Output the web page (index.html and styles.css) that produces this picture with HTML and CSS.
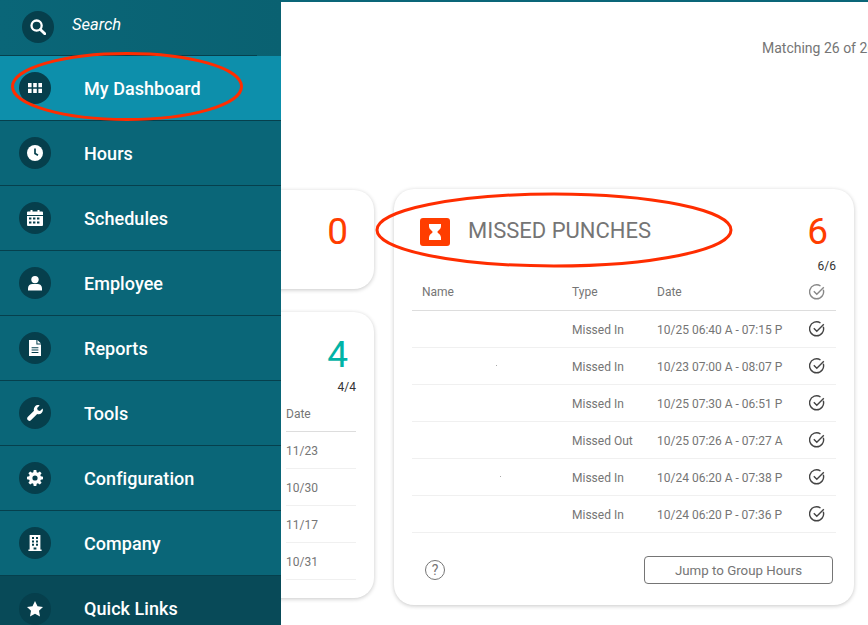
FILE: index.html
```html
<!DOCTYPE html>
<html lang="en">
<head>
<meta charset="utf-8">
<title>My Dashboard</title>
<link rel="stylesheet" href="styles.css">
</head>
<body>
<div class="page">
  <nav class="sidebar">
    <div class="search">
      <div class="search-inner">
        <span class="disc">
          <svg viewBox="0 0 16 16" class="ico"><circle cx="6.600" cy="6.600" r="5.100" fill="none" stroke="#fff" stroke-width="2.300"/><path d="M10.400 10.400l4.400 4.400" stroke="#fff" stroke-width="2.800" stroke-linecap="round"/></svg>
        </span>
        <span class="search-label">Search</span>
      </div>
    </div>
    <a class="item active">
      <span class="disc"><svg viewBox="0 0 16 16" class="ico"><path d="M1 3h3.600v4.200H1zM6.200 3h3.600v4.200H6.200zM11.400 3H15v4.200h-3.600zM1 8.800h3.600V13H1zM6.200 8.800h3.600V13H6.200zM11.400 8.800H15V13h-3.600z" fill="#fff"/></svg></span>
      <span class="label">My Dashboard</span>
    </a>
    <a class="item">
      <span class="disc"><svg viewBox="0 0 16 16" class="ico"><circle cx="8" cy="8" r="8" fill="#fff"/><path d="M8 3.400V8.400l3 1.800" fill="none" stroke="#063f4c" stroke-width="1.700"/></svg></span>
      <span class="label">Hours</span>
    </a>
    <a class="item">
      <span class="disc"><svg viewBox="0 0 16 16" class="ico"><path fill="#fff" fill-rule="evenodd" d="M3.500 0h2v1.600h5V0h2v1.600H15a1 1 0 0 1 1 1V5H0V2.600a1 1 0 0 1 1-1h2.500zM0 6h16v9a1 1 0 0 1-1 1H1a1 1 0 0 1-1-1zM2 7.600v2h2.400v-2zm4 0v2h2.400v-2zm4 0v2h2.400v-2zM2 11.400v2h2.400v-2zm4 0v2h2.400v-2zm4 0v2h2.400v-2z"/></svg></span>
      <span class="label">Schedules</span>
    </a>
    <a class="item">
      <span class="disc"><svg viewBox="0 0 16 16" class="ico"><circle cx="8" cy="4.600" r="3.700" fill="#fff"/><path d="M1 15.400v-2.200C1 10.600 3.200 9 5.400 9h5.200c2.200 0 4.400 1.600 4.400 4.200v2.200z" fill="#fff"/></svg></span>
      <span class="label">Employee</span>
    </a>
    <a class="item">
      <span class="disc"><svg viewBox="0 0 16 16" class="ico"><path fill="#fff" fill-rule="evenodd" d="M2 0h7.400v4.600H14V16H2zM10.400 0L14 3.600h-3.600zM4.600 7.200v1h6.800v-1zm0 2.400v1h6.800v-1zm0 2.400v1h6.800v-1z"/></svg></span>
      <span class="label">Reports</span>
    </a>
    <a class="item">
      <span class="disc"><svg viewBox="0 0 16 16" class="ico"><path fill="#fff" d="M15.600 3.400l-2.600 2.500-2.300-.6-.6-2.300L12.600.4c-1.600-.6-3.400-.3-4.600 1-1.200 1.200-1.500 2.900-1 4.400L.7 12.100c-.8.8-.8 2 0 2.800l.4.4c.8.8 2 .8 2.800 0l6.300-6.300c1.500.5 3.200.2 4.400-1 1.300-1.200 1.600-3 1-4.600z"/></svg></span>
      <span class="label">Tools</span>
    </a>
    <a class="item">
      <span class="disc"><svg viewBox="0 0 16 16" class="ico"><path fill="#fff" fill-rule="evenodd" d="M6.700 0h2.600l.4 2.200 1.200.5 1.900-1.300 1.800 1.800-1.300 1.900.5 1.200 2.200.4v2.600l-2.200.4-.5 1.200 1.300 1.900-1.800 1.800-1.900-1.300-1.200.5-.4 2.200H6.700l-.4-2.200-1.200-.5-1.900 1.300-1.800-1.800 1.300-1.900-.5-1.200L0 9.300V6.700l2.200-.4.500-1.200L1.400 3.200l1.800-1.800 1.900 1.300 1.200-.5zM8 5.400a2.600 2.600 0 1 0 0 5.200 2.600 2.600 0 0 0 0-5.200z"/></svg></span>
      <span class="label">Configuration</span>
    </a>
    <a class="item">
      <span class="disc"><svg viewBox="0 0 16 16" class="ico"><path fill="#fff" fill-rule="evenodd" d="M2.600 0h10.800v14.600h1.200V16H1.400v-1.400h1.200zM5 2v2h2V2zm4 0v2h2V2zM5 5.400v2h2v-2zm4 0v2h2v-2zM5 8.800v2h2v-2zm4 0v2h2v-2zM6.600 12.400v2.200h2.800v-2.200z"/></svg></span>
      <span class="label">Company</span>
    </a>
    <a class="item quick">
      <span class="disc"><svg viewBox="0 0 16 16" class="ico"><path fill="#fff" d="M8 0l2.500 5.200 5.500.7-4 3.900 1 5.600L8 12.700l-5 2.700 1-5.600-4-3.900 5.500-.7z"/></svg></span>
      <span class="label">Quick Links</span>
    </a>
  </nav>

  <main class="main">
    <p class="matching">Matching 26 of 26 employees</p>
    <div class="board">
      <div class="side-col">
        <section class="card card-small">
          <div class="count red">0</div>
        </section>
        <section class="card card-list">
          <div class="count teal">4</div>
          <div class="ratio">4/4</div>
          <div class="mini-head">Date</div>
          <div class="mini-row">11/23</div>
          <div class="mini-row">10/30</div>
          <div class="mini-row">11/17</div>
          <div class="mini-row">10/31</div>
        </section>
      </div>

      <section class="card card-main">
        <header class="card-head">
          <span class="badge">
            <svg viewBox="0 0 30 28" width="30" height="28"><path fill="#fff" d="M9 6h12v2.600c0 2.600-2.600 3.800-3.800 5.400 1.200 1.600 3.800 2.800 3.800 5.400V22H9v-2.600c0-2.600 2.600-3.800 3.800-5.400C11.600 12.400 9 11.200 9 8.600z"/></svg>
          </span>
          <h2 class="title">MISSED PUNCHES</h2>
          <div class="count red">6</div>
        </header>
        <div class="ratio">6/6</div>
        <table class="grid">
          <thead>
            <tr>
              <th class="c-name">Name</th><th class="c-type">Type</th><th class="c-date">Date</th>
              <th class="c-check"><svg class="check head-check" viewBox="0 0 16 16"><path d="M14.300 5.800A7 7 0 1 1 11.500 2" /><path d="M4.800 7.300l3 3 7-7"/></svg></th>
            </tr>
          </thead>
          <tbody>
            <tr><td></td><td class="cell">Missed In</td><td class="cell">10/25 06:40 A - 07:15 P</td><td class="c-check"><svg class="check" viewBox="0 0 16 16"><path d="M14.300 5.800A7 7 0 1 1 11.500 2" /><path d="M4.800 7.300l3 3 7-7"/></svg></td></tr>
            <tr><td><span class="speck"></span></td><td class="cell">Missed In</td><td class="cell">10/23 07:00 A - 08:07 P</td><td class="c-check"><svg class="check" viewBox="0 0 16 16"><path d="M14.300 5.800A7 7 0 1 1 11.500 2" /><path d="M4.800 7.300l3 3 7-7"/></svg></td></tr>
            <tr><td></td><td class="cell">Missed In</td><td class="cell">10/25 07:30 A - 06:51 P</td><td class="c-check"><svg class="check" viewBox="0 0 16 16"><path d="M14.300 5.800A7 7 0 1 1 11.500 2" /><path d="M4.800 7.300l3 3 7-7"/></svg></td></tr>
            <tr><td></td><td class="cell">Missed Out</td><td class="cell">10/25 07:26 A - 07:27 A</td><td class="c-check"><svg class="check" viewBox="0 0 16 16"><path d="M14.300 5.800A7 7 0 1 1 11.500 2" /><path d="M4.800 7.300l3 3 7-7"/></svg></td></tr>
            <tr><td><span class="speck speck-b"></span></td><td class="cell">Missed In</td><td class="cell">10/24 06:20 A - 07:38 P</td><td class="c-check"><svg class="check" viewBox="0 0 16 16"><path d="M14.300 5.800A7 7 0 1 1 11.500 2" /><path d="M4.800 7.300l3 3 7-7"/></svg></td></tr>
            <tr><td></td><td class="cell">Missed In</td><td class="cell">10/24 06:20 P - 07:36 P</td><td class="c-check"><svg class="check" viewBox="0 0 16 16"><path d="M14.300 5.800A7 7 0 1 1 11.500 2" /><path d="M4.800 7.300l3 3 7-7"/></svg></td></tr>
          </tbody>
        </table>
        <footer class="card-foot">
          <span class="help">?</span>
          <button class="jump" type="button">Jump to Group Hours</button>
        </footer>
      </section>
    </div>
  </main>

  <svg class="marks" viewBox="0 0 868 625" width="868" height="625" aria-hidden="true">
    <ellipse cx="127" cy="86.500" rx="114.500" ry="33" />
    <ellipse cx="554" cy="230" rx="177" ry="36" />
  </svg>
</div>
</body>
</html>
```

FILE: styles.css
```css
* { box-sizing: border-box; }
html, body { margin: 0; height: 100%; background: #fff; }
body { font-family: Roboto, "Liberation Sans", sans-serif; overflow: hidden; }

.page { position: relative; display: flex; width: 868px; height: 625px; overflow: hidden; }

/* Sidebar */
.sidebar { flex: 0 0 281px; height: 625px; background: #0a6678; color: #fff; position: relative; z-index: 2; overflow: hidden; }
.search { height: 56px; background: linear-gradient(90deg, #0a6678, #0a6171); }
.search-inner { width: 257px; height: 56px; padding: 11px 0 0 22px; display: flex; align-items: flex-start; gap: 18px; border-bottom: 1px solid #06404d; }
.search-label { font-size: 16.500px; font-style: italic; line-height: 27px; }
.item { display: flex; align-items: center; height: 65px; padding-left: 19px; border-bottom: 1px solid #06404d; }
.item .label { margin-left: 33px; font-size: 18px; font-weight: 500; letter-spacing: .05px; }
.active { background: #0d8fab; }
.quick { background: #084a58; border-bottom: 0; }
.disc { flex: none; width: 32px; height: 32px; border-radius: 50%; background: #063f4c; display: flex; align-items: center; justify-content: center; }
.ico { width: 16px; height: 16px; display: block; }

/* Main */
.main { flex: 1; min-width: 0; height: 625px; border-top: 2px solid #0a6678; overflow: hidden; }
.matching { margin: 36px 0 0 481px; font-size: 14px; line-height: 20px; color: #757575; white-space: nowrap; }
.board { display: flex; gap: 20px; margin-top: 131px; }
.side-col { flex: 0 0 93px; display: flex; flex-direction: column; gap: 23px; padding-top: 1px; }

.card { background: #fff; border-radius: 20px; box-shadow: 0 1px 4px rgba(0,0,0,.22); }
.card-small { height: 99px; margin-left: -40px; padding: 21px 26px 0 0; text-align: right; }
.card-list { height: 286px; margin-left: -40px; padding: 22px 0 0 45px; position: relative; }
.card-list .count { text-align: right; padding-right: 26px; }
.card-list .ratio { text-align: right; padding-right: 18px; margin-top: 3px; }
.mini-head { margin-top: 11px; height: 26px; font-size: 12px; line-height: 16px; color: #757575; border-bottom: 1px solid #ddd; margin-right: 18px; }
.mini-row { height: 37px; font-size: 12px; line-height: 38px; color: #757575; border-bottom: 1px solid #f0f0f0; margin-right: 18px; }

.card-main { flex: 0 0 460px; height: 416px; padding: 0 18px; }
.card-head { display: flex; align-items: center; height: 86px; padding: 0 8px; margin-bottom: -17px; }
.badge { width: 30px; height: 28px; border-radius: 3px; background: #ff3d00; display: block; flex: none; }
.badge svg { display: block; }
.title { margin: -3px 0 0 18px; font-size: 22px; font-weight: 400; color: #757575; flex: 1; }
.count { font-size: 37px; line-height: 42px; font-weight: 400; }
.red { color: #ff3d00; }
.teal { color: #00b3a6; }
.ratio { font-size: 12px; line-height: 16px; color: #333; text-align: right; }

.grid { width: 424px; border-collapse: collapse; table-layout: fixed; }
.grid th { height: 36px; font-size: 12px; font-weight: 400; color: #757575; text-align: left; border-bottom: 1px solid #ddd; padding: 0; }
.grid td { height: 37px; font-size: 12px; color: #757575; border-bottom: 1px solid #f0f0f0; padding: 0; }
.grid .cell { padding-top: 2px; }
.c-name { width: 160px; padding-left: 10px !important; }
.c-type { width: 85px; }
.c-date { width: 152px; }
.c-check { text-align: left; }
.check { display: block; width: 16px; height: 16px; fill: none; stroke: #444; stroke-width: 1.400; }
.head-check { stroke: #888; }
.speck { display: block; width: 1px; height: 1px; margin-left: 84px; background: #aaa; }
.speck-b { margin-left: 88px; }

.card-foot { display: flex; align-items: center; justify-content: space-between; margin-top: 23px; padding: 0 3px 0 13px; }
.help { width: 20px; height: 20px; border: 1px solid #757575; border-radius: 50%; font-size: 14px; line-height: 18px; text-align: center; color: #757575; }
.jump { width: 189px; height: 28px; background: #fff; border: 1px solid #757575; border-radius: 4px; font: 400 13.300px Roboto, sans-serif; color: #757575; padding: 2px 0 0; }

/* Hand-drawn highlight rings lying over the page */
.marks { position: absolute; left: 0; top: 0; z-index: 3; pointer-events: none; }
.marks ellipse { fill: none; stroke: #ff2d00; stroke-width: 3; }
```
